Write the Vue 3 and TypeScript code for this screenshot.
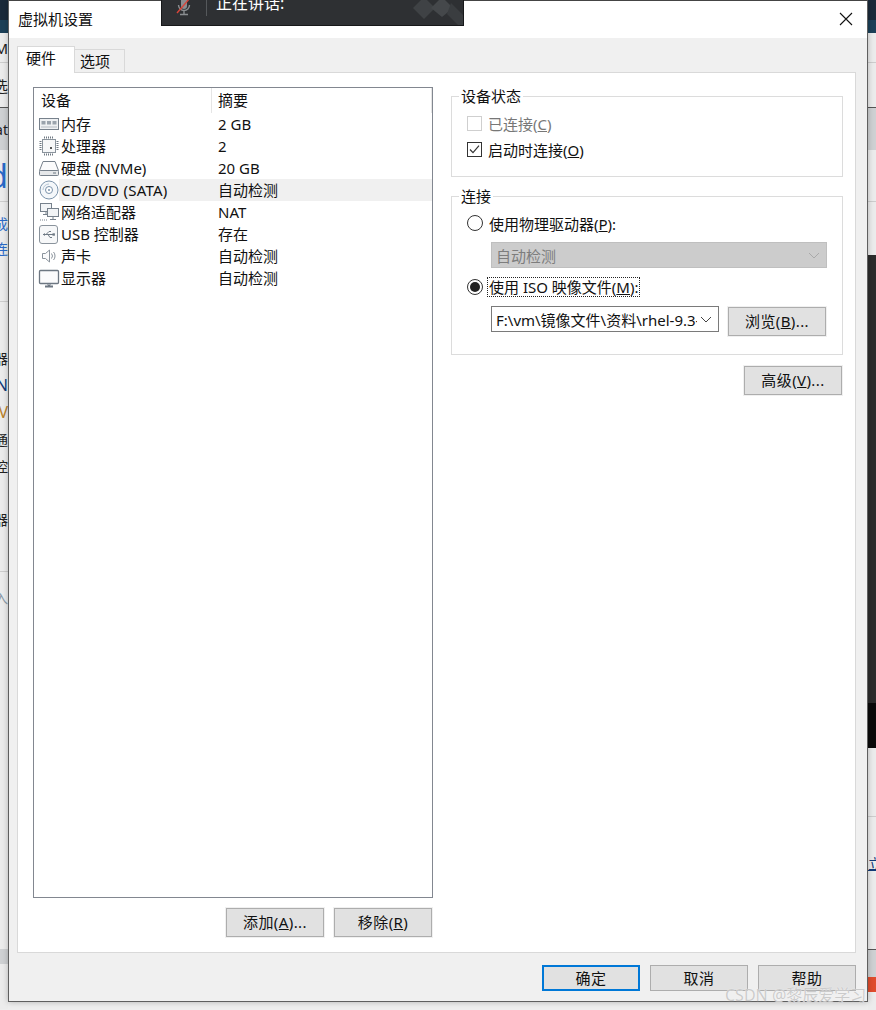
<script setup lang="ts">
interface Band { h: number; cls: string; text?: string; tcls?: string }

const rows = [
  { icon: 'mem', name: '内存', value: '2 GB' },
  { icon: 'cpu', name: '处理器', value: '2' },
  { icon: 'disk', name: '硬盘 (NVMe)', value: '20 GB' },
  { icon: 'cd', name: 'CD/DVD (SATA)', value: '自动检测', selected: true },
  { icon: 'net', name: '网络适配器', value: 'NAT' },
  { icon: 'usb', name: 'USB 控制器', value: '存在' },
  { icon: 'snd', name: '声卡', value: '自动检测' },
  { icon: 'mon', name: '显示器', value: '自动检测' },
]

const leftBands: Band[] = [
  { h: 20, cls: 'navy' },
  { h: 13, cls: 'teal' },
  { h: 30, cls: 'light line', text: 'M', tcls: 'ink' },
  { h: 45, cls: 'light dark-line', text: '选', tcls: 'ink' },
  { h: 42, cls: 'grey', text: 'at', tcls: 'ink small' },
  { h: 52, cls: 'light line', text: 'd', tcls: 'blue big' },
  { h: 8, cls: 'light' },
  { h: 26, cls: 'light', text: '成', tcls: 'blue small' },
  { h: 24, cls: 'light', text: '连', tcls: 'blue small' },
  { h: 42, cls: 'light line' },
  { h: 42, cls: 'light' },
  { h: 27, cls: 'light', text: '器', tcls: 'ink small' },
  { h: 27, cls: 'light', text: 'N', tcls: 'navy-t' },
  { h: 27, cls: 'light', text: 'V', tcls: 'amber' },
  { h: 27, cls: 'light', text: '通', tcls: 'ink small' },
  { h: 27, cls: 'light', text: '控', tcls: 'ink small' },
  { h: 26, cls: 'light' },
  { h: 27, cls: 'light', text: '器', tcls: 'ink small' },
  { h: 40, cls: 'light line' },
  { h: 50, cls: 'light', text: '入', tcls: 'slate small' },
  { h: 327, cls: 'light' },
  { h: 15, cls: 'grey' },
  { h: 45, cls: 'pale' },
]

const rightBands: Band[] = [
  { h: 20, cls: 'navy' },
  { h: 13, cls: 'teal' },
  { h: 30, cls: 'light line' },
  { h: 45, cls: 'light dark-line' },
  { h: 42, cls: 'grey' },
  { h: 52, cls: 'light line' },
  { h: 53, cls: 'light' },
  { h: 448, cls: 'char' },
  { h: 45, cls: 'black' },
  { h: 69, cls: 'light line' },
  { h: 28, cls: 'light' },
  { h: 35, cls: 'light', text: '立', tcls: 'ink small under start' },
  { h: 70, cls: 'light dark-line' },
  { h: 27, cls: 'grey' },
  { h: 15, cls: 'orange' },
  { h: 18, cls: 'pale' },
]
</script>

<template>
  <div class="screen">
    <div class="strip">
      <div v-for="(b, i) in leftBands" :key="i" class="band" :class="b.cls" :style="{ height: b.h + 'px' }">
        <span v-if="b.text" :class="b.tcls">{{ b.text }}</span>
      </div>
    </div>

    <section class="dialog">
      <header class="titlebar">
        <span class="title">虚拟机设置</span>
        <svg class="close" width="14" height="14" viewBox="0 0 14 14"><path d="M1 1l12 12M13 1L1 13" stroke="#111" stroke-width="1.1" fill="none" /></svg>
      </header>

      <div class="client">
        <nav class="tabs">
          <div class="tab active">硬件</div>
          <div class="tab">选项</div>
        </nav>

        <div class="page">
          <div class="left">
            <div class="list">
              <div class="head">
                <span class="h-name">设备</span>
                <span class="h-value">摘要</span>
              </div>
              <div v-for="r in rows" :key="r.icon" class="row">
                <span class="icon">
                  <svg width="22" height="22" viewBox="0 0 22 22" fill="none" stroke="#77818c" stroke-width="1">
                    <template v-if="r.icon === 'mem'">
                      <rect x="1.5" y="5.5" width="19" height="11" fill="#eef0f2" />
                      <rect x="3.5" y="8" width="4" height="3.5" fill="#9aa3ac" stroke="none" />
                      <rect x="9" y="8" width="4" height="3.5" fill="#9aa3ac" stroke="none" />
                      <rect x="14.5" y="8" width="4" height="3.5" fill="#9aa3ac" stroke="none" />
                      <path d="M3 14h16" stroke="#b5bbc2" />
                    </template>
                    <template v-else-if="r.icon === 'cpu'">
                      <rect x="4.5" y="4.5" width="13" height="13" stroke="#8a939c" fill="#f6f7f8" />
                      <path d="M6.5 1.5v2M8.5 1.5v2M10.5 1.5v2M12.5 1.5v2M14.5 1.5v2M6.5 18.5v2M8.5 18.5v2M10.5 18.5v2M12.5 18.5v2M14.5 18.5v2M1.5 6.5h2M1.5 8.5h2M1.5 10.5h2M1.5 12.5h2M1.5 14.5h2M18.5 6.5h2M18.5 8.5h2M18.5 10.5h2M18.5 12.5h2M18.5 14.5h2" stroke="#6f7983" />
                      <rect x="12" y="12" width="2" height="2" fill="#555" stroke="none" />
                    </template>
                    <template v-else-if="r.icon === 'disk'">
                      <path d="M5 4.5h12l3.5 9h-19z" fill="#fbfbfc" />
                      <rect x="1.5" y="13.5" width="19" height="5" rx="1" fill="#e6e8ea" />
                      <path d="M15 16h3" stroke="#6b7681" />
                    </template>
                    <template v-else-if="r.icon === 'cd'">
                      <circle cx="11" cy="11" r="9" stroke="#7b93ab" fill="#f4f7fa" />
                      <circle cx="11" cy="11" r="3.5" stroke="#7b93ab" fill="#fff" />
                      <circle cx="11" cy="11" r="1" fill="#7b93ab" stroke="none" />
                      <path d="M5 11a6 6 0 0 1 6-6" stroke="#b7c6d5" />
                    </template>
                    <template v-else-if="r.icon === 'net'">
                      <rect x="2.5" y="2.5" width="11" height="8" fill="#f2f4f6" />
                      <path d="M8 11v2M5 13.5h6" />
                      <rect x="9.5" y="7.5" width="11" height="8" fill="#f2f4f6" />
                      <path d="M15 16v2M12 18.5h6" />
                      <path d="M2 19h8" stroke-dasharray="1 1" />
                    </template>
                    <template v-else-if="r.icon === 'usb'">
                      <rect x="1.5" y="2.5" width="18" height="18" rx="2.5" fill="#f7f8f9" stroke="#8a939c" />
                      <path d="M5 11.5h11M8 11.5l3-3h2M10 11.5l2 3h2" stroke="#6f7a85" />
                      <path d="M5 11.5l2-1.6v3.2z" fill="#6f7a85" stroke="none" />
                      <rect x="14.5" y="10.3" width="2.4" height="2.4" fill="#6f7a85" stroke="none" />
                    </template>
                    <template v-else-if="r.icon === 'snd'">
                      <path d="M4.5 8.5h3l4-3.5v12l-4-3.5h-3z" fill="#fbfbfc" stroke="#8a939c" />
                      <path d="M13.5 8.5a4 4 0 0 1 0 5M15.5 7a6 6 0 0 1 0 8" stroke="#8a939c" />
                    </template>
                    <template v-else>
                      <rect x="1.5" y="3.5" width="19" height="13" rx="1" fill="#fbfbfc" stroke="#6d7782" stroke-width="1.3" />
                      <path d="M7 19.5h8" stroke="#6d7782" stroke-width="2" />
                      <path d="M10 17v1.5h2V17" stroke="#6d7782" />
                    </template>
                  </svg>
                </span>
                <div class="cells" :class="{ selected: r.selected }">
                  <span class="c-name">{{ r.name }}</span>
                  <span class="c-value">{{ r.value }}</span>
                </div>
              </div>
            </div>
            <div class="list-actions">
              <button class="btn">添加(<u>A</u>)...</button>
              <button class="btn">移除(<u>R</u>)</button>
            </div>
          </div>

          <div class="right">
            <div class="group status">
              <span class="legend">设备状态</span>
              <div class="opt disabled">
                <span class="check off"></span>
                <span>已连接(<u>C</u>)</span>
              </div>
              <div class="opt">
                <span class="check">
                  <svg width="13" height="13" viewBox="0 0 13 13"><path d="M2 6.5l3 3.2 6-7" stroke="#333" stroke-width="1.2" fill="none" /></svg>
                </span>
                <span>启动时连接(<u>O</u>)</span>
              </div>
            </div>

            <div class="group conn">
              <span class="legend">连接</span>
              <div class="opt radio-row">
                <span class="radio"></span>
                <span>使用物理驱动器(<u>P</u>):</span>
              </div>
              <div class="select dis">
                <span>自动检测</span>
                <svg width="12" height="7" viewBox="0 0 12 7"><path d="M1 1l5 5 5-5" stroke="#a9a9a9" fill="none" /></svg>
              </div>
              <div class="opt radio-row">
                <span class="radio on"><i></i></span>
                <span class="focus">使用 ISO 映像文件(<u>M</u>):</span>
              </div>
              <div class="iso-row">
                <div class="select iso">
                  <span class="iso-text">F:\vm\镜像文件\资料\rhel-9.3-</span>
                  <svg width="12" height="7" viewBox="0 0 12 7"><path d="M1 1l5 5 5-5" stroke="#444" fill="none" /></svg>
                </div>
                <button class="btn browse">浏览(<u>B</u>)...</button>
              </div>
            </div>

            <button class="btn advanced">高级(<u>V</u>)...</button>
          </div>
        </div>

        <footer class="footer">
          <button class="btn low primary">确定</button>
          <button class="btn low">取消</button>
          <button class="btn low">帮助</button>
        </footer>
      </div>
    </section>

    <div class="strip">
      <div v-for="(b, i) in rightBands" :key="i" class="band" :class="b.cls" :style="{ height: b.h + 'px' }">
        <span v-if="b.text" :class="b.tcls">{{ b.text }}</span>
      </div>
    </div>

    <div class="meeting">
      <svg class="mic" width="22" height="22" viewBox="0 0 22 22" fill="none">
        <rect x="8" y="-3" width="6" height="12" rx="3" fill="#8a8d90" />
        <path d="M5.5 5a5.5 5.5 0 0 0 11 0M11 11v3M7 14.5h8" stroke="#8a8d90" stroke-width="1.4" />
        <path d="M17 -2L4 13" stroke="#d9453a" stroke-width="1.4" />
      </svg>
      <span class="divider"></span>
      <span class="speaking">正在讲话:</span>
      <svg class="diamonds" width="50" height="26" viewBox="0 0 50 26">
        <path d="M0 8L11-3l11 11-11 11z" fill="#3f4245" />
        <path d="M18 8L29-3l11 11-11 9z" fill="#45484b" />
        <path d="M38 3l12 12v11H46L34 14z" fill="#3a3d40" />
      </svg>
    </div>

    <div class="watermark">CSDN @黎辰爱学习</div>
  </div>
</template>

<style>
html, body { margin: 0; background: #eeeeee; }
</style>

<style scoped>
.screen {
  position: relative;
  display: flex;
  width: 876px;
  height: 1010px;
  overflow: hidden;
  background: #eeeeee;
  font-family: "Noto Sans", "Noto Sans CJK SC", sans-serif;
  font-size: 15px;
  color: #111;
}
.strip {
  width: 8px;
  flex: none;
  display: flex;
  flex-direction: column;
}
.band {
  box-sizing: border-box;
  flex: none;
  display: flex;
  align-items: center;
  justify-content: flex-end;
  overflow: hidden;
  white-space: nowrap;
  font-size: 15px;
}
.navy { background: #1b2a3a; }
.teal { background: #1c4058; }
.light { background: #ececec; }
.pale { background: #ececec; }
.grey { background: #cfd1d3; }
.char { background: #2c2c2c; }
.black { background: #0a0a0a; }
.orange { background: #e04c2d; }
.line { border-bottom: 1px solid #cdcdcd; }
.dark-line { border-bottom: 1px solid #555; }
.ink { color: #222; }
.small { font-size: 14px; }
.blue { color: #2a6ac8; }
.slate { color: #8a9aa8; }
.big { font-size: 32px; }
.navy-t { color: #123a78; font-size: 16px; }
.amber { color: #b8802a; font-size: 16px; }
.under { text-decoration: underline; color: #123a78; }
.start { align-self: center; margin-right: -6px; }

.dialog {
  box-sizing: border-box;
  width: 860px;
  height: 1002px;
  flex: none;
  display: flex;
  flex-direction: column;
  border: 1px solid #5f5f5f;
  border-top-color: #444;
  background: #f0f0f0;
  box-shadow: 0 0 6px rgba(0, 0, 0, 0.25);
  position: relative;
}
.titlebar {
  box-sizing: border-box;
  height: 37px;
  flex: none;
  display: flex;
  align-items: center;
  justify-content: space-between;
  background: #fff;
  padding: 0 14px 2px 9px;
}
.title { font-size: 15px; color: #111; }
.close { display: block; }

.client {
  flex: 1;
  display: flex;
  flex-direction: column;
  padding: 0 10px 0 8px;
}
.tabs {
  height: 34px;
  flex: none;
  display: flex;
  align-items: flex-end;
  position: relative;
  z-index: 1;
}
.tab {
  box-sizing: border-box;
  height: 23px;
  width: 51px;
  margin-left: -1px;
  border: 1px solid #d9d9d9;
  border-bottom: 0;
  background: #f0f0f0;
  padding-left: 5px;
  line-height: 23px;
  margin-bottom: 0;
}
.tab.active {
  height: 27px;
  width: 58px;
  margin-left: 0;
  margin-bottom: -1px;
  background: #fff;
  padding-left: 8px;
  line-height: 23px;
  z-index: 2;
}
.page {
  box-sizing: border-box;
  width: 839px;
  height: 881px;
  flex: none;
  display: flex;
  border: 1px solid #d9d9d9;
  background: #fff;
  padding: 14px 0 0 15px;
  gap: 18px;
}
.left { width: 400px; flex: none; }
.list {
  box-sizing: border-box;
  height: 811px;
  border: 1px solid #828790;
  background: #fff;
}
.head {
  height: 25px;
  display: flex;
  align-items: center;
  line-height: 25px;
}
.h-name {
  box-sizing: border-box;
  width: 178px;
  padding-left: 7px;
  border-right: 1px solid #e5e5e5;
  height: 100%;
}
.h-value {
  box-sizing: border-box;
  width: 220px;
  padding-left: 6px;
  border-right: 1px solid #e5e5e5;
  height: 100%;
}
.row { height: 22px; display: flex; align-items: center; }
.icon { width: 25px; flex: none; display: flex; justify-content: flex-end; height: 22px; }
.icon svg { display: block; margin-right: -1px; }
.cells { flex: 1; display: flex; height: 22px; line-height: 22px; }
.cells.selected { background: #f0f0f0; }
.cells.selected .c-name { letter-spacing: 0.25px; }
.c-name { box-sizing: border-box; width: 153px; padding-left: 2px; white-space: nowrap; }
.c-value { padding-left: 6px; white-space: nowrap; }
.list-actions {
  display: flex;
  justify-content: flex-end;
  gap: 10px;
  margin-top: 10px;
  padding-right: 1px;
}
.btn {
  box-sizing: border-box;
  width: 98px;
  height: 29px;
  padding: 0 0 2px;
  border: 1px solid #adadad;
  background: #e1e1e1;
  font: inherit;
  letter-spacing: 0.4px;
  color: #111;
  box-shadow: 0 0 0 1px #f0f0f0;
}
.btn.low { height: 26px; box-shadow: none; }
.btn.primary { border: 2px solid #0078d7; }

.right { width: 392px; flex: none; display: flex; flex-direction: column; padding-top: 9px; }
.group {
  box-sizing: border-box;
  position: relative;
  border: 1px solid #dcdcdc;
  padding: 14px 0 0 15px;
}
.legend {
  position: absolute;
  left: 7px;
  top: -11px;
  padding: 0 2px;
  line-height: 20px;
  background: #fff;
}
.status { height: 81px; padding-top: 13px; }
.conn { height: 159px; margin-top: 19px; }
.opt { height: 26px; display: flex; align-items: center; gap: 6px; }
.opt.disabled { color: #777; }
.check {
  box-sizing: border-box;
  width: 15px;
  height: 15px;
  border: 1px solid #333;
  background: #fff;
  display: flex;
  align-items: center;
  justify-content: center;
}
.check.off { border-color: #cfcfcf; }
.check svg { display: block; }
.radio-row { height: 24px; }
.radio {
  box-sizing: border-box;
  width: 16px;
  height: 16px;
  border: 1px solid #333;
  border-radius: 50%;
  display: flex;
  align-items: center;
  justify-content: center;
  background: #fff;
}
.radio i { width: 10px; height: 10px; background: #222; border-radius: 50%; display: block; }
.focus {
  outline: 1px dotted #222;
  line-height: 18px;
  padding: 0 1px;
  margin-left: -1px;
}
.select {
  box-sizing: border-box;
  height: 26px;
  display: flex;
  align-items: center;
  justify-content: space-between;
  margin: 7px 0 7px 24px;
  padding: 0 6px 0 4px;
}
.select.dis {
  width: 336px;
  background: #cccccc;
  border: 1px solid #bfbfbf;
  color: #7d7d7d;
}
.select svg { flex: none; display: block; }
.iso-row { display: flex; align-items: flex-start; gap: 9px; margin: 7px 0 0 24px; }
.select.iso {
  width: 228px;
  margin: 0;
  background: #fff;
  border: 1px solid #7a7a7a;
}
.iso-text { white-space: nowrap; overflow: hidden; width: 201px; }
.browse { margin-top: 1px; }
.advanced { align-self: flex-end; margin: 11px 1px 0 0; }

.footer {
  flex: none;
  display: flex;
  justify-content: flex-end;
  gap: 10px;
  padding-top: 12px;
  padding-right: 1px;
}

.meeting {
  box-sizing: border-box;
  position: absolute;
  left: 161px;
  top: 0;
  width: 303px;
  height: 26px;
  background: #2e3033;
  border: 1px solid #17181a;
  border-top: 0;
  overflow: hidden;
}
.mic { position: absolute; left: 11px; top: 0; }
.divider { position: absolute; left: 44px; top: 0; width: 1px; height: 16px; background: #55585b; }
.speaking { position: absolute; left: 54px; top: -9px; color: #fff; font-size: 16px; line-height: 24px; white-space: nowrap; }
.diamonds { position: absolute; right: 0; top: 0; }

.watermark {
  position: absolute;
  left: 725px;
  top: 984px;
  font-size: 16px;
  line-height: 22px;
  white-space: nowrap;
  color: rgba(195, 195, 195, 0.85);
  text-shadow: 0 0 1px rgba(255, 255, 255, 0.9);
}
</style>
